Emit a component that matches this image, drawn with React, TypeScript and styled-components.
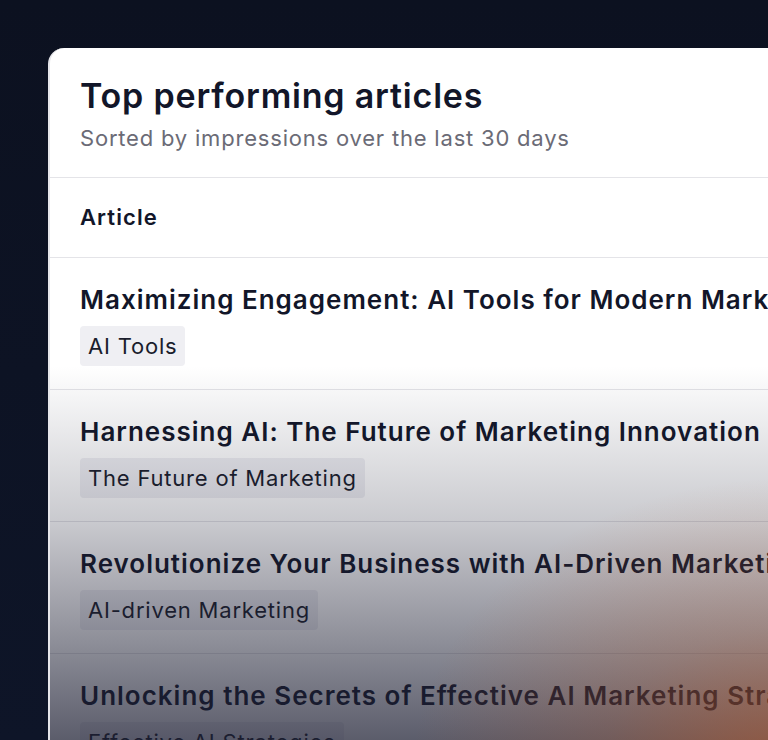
import React from "react";
import styled, { createGlobalStyle } from "styled-components";

const GlobalStyle = createGlobalStyle`
  html, body {
    margin: 0;
    padding: 0;
    background: #0d1222;
    overflow: hidden;
  }
  body {
    font-family: Inter, "Noto Sans", sans-serif;
    -webkit-font-smoothing: antialiased;
  }
`;

const Page = styled.div`
  width: 768px;
  height: 740px;
  overflow: hidden;
  box-sizing: border-box;
  padding: 48px 0 0 48px;
  background: linear-gradient(180deg, #0c1120 0%, #0e1528 100%);
`;

const Card = styled.section`
  position: relative;
  width: 1000px;
  height: 692px;
  overflow: hidden;
  background: #fff;
  border-radius: 16px 0 0 0;
  border-left: 2px solid #e6e6ea;
  box-sizing: border-box;
`;

const Header = styled.header`
  padding: 28px 30px 25px;
  border-bottom: 1px solid #e4e4e8;
`;

const Title = styled.h1`
  margin: 0;
  font-size: 34px;
  line-height: 40px;
  font-weight: 600;
  color: #121629;
  letter-spacing: 0.8px;
`;

const Subtitle = styled.p`
  margin: 8px 0 0;
  font-size: 22px;
  line-height: 28px;
  font-weight: 400;
  color: #6b6b76;
  letter-spacing: 0.8px;
`;

const ColumnHead = styled.div`
  padding: 24px 30px;
  font-size: 22px;
  line-height: 31px;
  font-weight: 600;
  color: #121629;
  letter-spacing: 1.1px;
  border-bottom: 1px solid #e4e4e8;
`;

const Row = styled.div`
  display: flex;
  flex-direction: column;
  align-items: flex-start;
  gap: 9px;
  padding: 25px 30px 23px;
  border-bottom: 1px solid #e4e4e8;
`;

const ArticleTitle = styled.div`
  font-size: 26px;
  line-height: 34px;
  font-weight: 600;
  color: #121629;
  letter-spacing: 1px;
  white-space: nowrap;
`;

const Tag = styled.span`
  display: inline-block;
  padding: 4px 8px;
  font-size: 22px;
  line-height: 32px;
  font-weight: 400;
  color: #1a1d2c;
  letter-spacing: 0.8px;
  background: #efeff3;
  border-radius: 4px;
  white-space: nowrap;
`;

const Fade = styled.div`
  position: absolute;
  left: 0;
  right: 0;
  top: 318px;
  bottom: 0;
  pointer-events: none;
  background:
    radial-gradient(ellipse 380px 300px at 740px 110%, rgba(190, 88, 36, 0.6) 0%, rgba(190, 88, 36, 0.22) 50%, rgba(190, 88, 36, 0) 100%),
    linear-gradient(180deg, rgba(28, 30, 50, 0) 0%, rgba(28, 30, 50, 0.08) 14%, rgba(28, 30, 50, 0.24) 42%, rgba(28, 30, 50, 0.5) 74%, rgba(28, 30, 50, 0.72) 100%);
`;

const articles = [
  { title: "Maximizing Engagement: AI Tools for Modern Marketing", tag: "AI Tools" },
  { title: "Harnessing AI: The Future of Marketing Innovation", tag: "The Future of Marketing" },
  { title: "Revolutionize Your Business with AI-Driven Marketing", tag: "AI-driven Marketing" },
  { title: "Unlocking the Secrets of Effective AI Marketing Strategies", tag: "Effective AI Strategies" },
];

export default function App() {
  return (
    <>
      <GlobalStyle />
      <Page>
        <Card>
          <Header>
            <Title>Top performing articles</Title>
            <Subtitle>Sorted by impressions over the last 30 days</Subtitle>
          </Header>
          <ColumnHead>Article</ColumnHead>
          {articles.map((a) => (
            <Row key={a.title}>
              <ArticleTitle>{a.title}</ArticleTitle>
              <Tag>{a.tag}</Tag>
            </Row>
          ))}
          <Fade />
        </Card>
      </Page>
    </>
  );
}
